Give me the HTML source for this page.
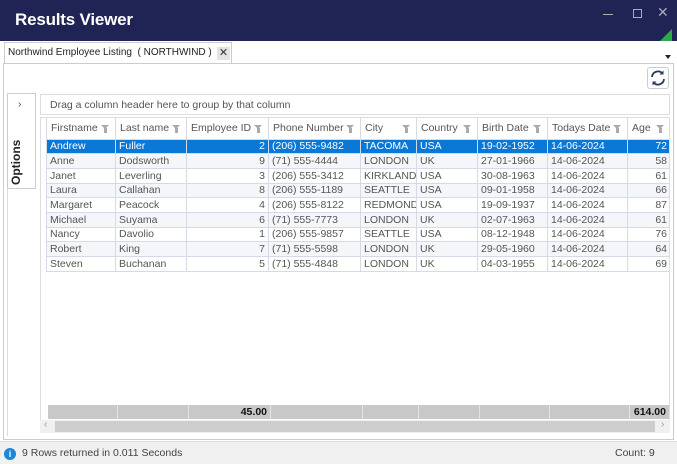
<!DOCTYPE html><html><head><style>
*{margin:0;padding:0;box-sizing:border-box}
body{width:677px;height:464px;overflow:hidden;font-family:"Liberation Sans",sans-serif;font-size:10.5px;color:#555;background:#fff;position:relative}
.title{position:absolute;left:0;top:0;width:677px;height:41px;background:#1f2454}
.title h1{position:absolute;left:15px;top:10px;color:#fff;font-size:17px;font-weight:bold;letter-spacing:-0.2px}
.tab{position:absolute;left:4px;top:42px;width:228px;height:21px;border:1px solid #ccc;border-bottom:none;background:#fff;font-size:10px;color:#222;padding:4px 0 0 3px;white-space:nowrap}
.x{position:absolute;left:212px;top:4px;width:13px;height:13px;background:#e4e4e4;font-size:11px;line-height:13px;text-align:center;color:#333}
.content{position:absolute;left:3px;top:63px;width:671px;height:377px;border:1px solid #ccc;background:#fff}
.side{position:absolute;left:7px;top:93px;width:30px;height:343px;border-left:1px solid #ddd}
.sidetab{position:absolute;left:7px;top:93px;width:29px;height:96px;border:1px solid #ccc;background:#fff}
.opt{position:absolute;left:9px;top:185px;transform:rotate(-90deg);transform-origin:0 0;font-size:12px;font-weight:bold;color:#222}
.group{position:absolute;left:40px;top:94px;width:630px;height:21px;border:1px solid #ddd;color:#555;padding:4px 0 0 9px}
.grid{position:absolute;left:40px;top:117px;width:630px;height:316px;border:1px solid #ddd;background:#fff;overflow:hidden}
table{border-collapse:collapse;position:absolute;left:5px;top:0;table-layout:fixed;width:624px}
td{height:14.7px;border:1px solid #d3dbe6;padding:0 3px;white-space:nowrap;overflow:hidden;font-size:10.5px;line-height:12px}
th{height:21px;border:1px solid #d3dbe6;border-top:none;text-align:left;font-weight:normal;padding:0 4px;color:#555;background:#fff;position:relative;white-space:nowrap;overflow:hidden;font-size:10.5px}
th i{position:absolute;right:5px;top:7px;width:9px;height:8px}
th i:before{content:"";position:absolute;left:0;top:0;border-left:4.5px solid transparent;border-right:4.5px solid transparent;border-top:4px solid #aaa}
th i:after{content:"";position:absolute;left:3px;top:3px;width:3px;height:5px;background:#aaa}
tr.alt td{background:#f4f6f9}
tr.sel td{background:#0a78d7;color:#fff}
.r{text-align:right}
.foot{position:absolute;left:48px;top:405px;width:621px;height:14px;background:#c8c8c8;display:flex}
.foot div{border-right:1px solid #e4e4e4;height:14px;font-weight:bold;color:#111;text-align:right;padding-right:3px;font-size:10.5px;line-height:14px}
.scroll{position:absolute;left:40px;top:420px;width:630px;height:13px;background:#f0f0f0}
.scroll .th{position:absolute;left:15px;top:1px;width:600px;height:11px;background:#cdcdcd}
.status{position:absolute;left:0;top:441px;width:677px;height:23px;background:#f0f0f0;border-top:1px solid #ddd;color:#444}
.ref{position:absolute;left:647px;top:67px;width:22px;height:22px;border:1px solid #ccc;border-radius:3px;background:#fff}
</style></head><body>
<div class="title"><h1>Results Viewer</h1>
<div style="position:absolute;left:603px;top:14px;width:10px;height:1px;background:#aab"></div>
<div style="position:absolute;left:633px;top:9px;width:9px;height:9px;border:1px solid #aab"></div>
<div style="position:absolute;left:657px;top:4px;color:#aab;font-size:14px">✕</div>
<div style="position:absolute;left:660px;top:29px;width:0;height:0;border-left:12px solid transparent;border-bottom:12px solid #2ea84a"></div>
</div>
<div class="tab">Northwind Employee Listing &nbsp;( NORTHWIND )<div class="x">✕</div></div>
<div style="position:absolute;left:665px;top:55px;width:5px;height:4px;border-left:3px solid transparent;border-right:3px solid transparent;border-top:4px solid #222"></div>
<div class="content"></div>
<div class="ref"><svg width="20" height="20" viewBox="0 0 20 20"><path d="M4 9a6 6 0 0 1 10.5-3.5M16 11a6 6 0 0 1-10.5 3.5" fill="none" stroke="#2a3a5a" stroke-width="1.8"/><path d="M15.5 2.5v4h-4z M4.5 17.5v-4h4z" fill="#2a3a5a"/></svg></div>
<div class="side"></div>
<div class="sidetab"><div style="position:absolute;left:10px;top:4px;color:#555">›</div></div>
<div class="opt">Options</div>
<div class="group">Drag a column header here to group by that column</div>
<div class="grid">
<table>
<colgroup><col style="width:69px"><col style="width:71px"><col style="width:82px"><col style="width:92px"><col style="width:56px"><col style="width:61px"><col style="width:70px"><col style="width:80px"><col style="width:43px"></colgroup>
<tr><th>Firstname<i></i></th><th>Last name<i></i></th><th>Employee ID<i></i></th><th>Phone Number<i></i></th><th>City<i></i></th><th>Country<i></i></th><th>Birth Date<i></i></th><th>Todays Date<i></i></th><th>Age<i></i></th></tr>
<tr class="sel"><td>Andrew</td><td>Fuller</td><td class="r">2</td><td>(206) 555-9482</td><td>TACOMA</td><td>USA</td><td>19-02-1952</td><td>14-06-2024</td><td class="r">72</td></tr>
<tr class="alt"><td>Anne</td><td>Dodsworth</td><td class="r">9</td><td>(71) 555-4444</td><td>LONDON</td><td>UK</td><td>27-01-1966</td><td>14-06-2024</td><td class="r">58</td></tr>
<tr><td>Janet</td><td>Leverling</td><td class="r">3</td><td>(206) 555-3412</td><td>KIRKLAND</td><td>USA</td><td>30-08-1963</td><td>14-06-2024</td><td class="r">61</td></tr>
<tr class="alt"><td>Laura</td><td>Callahan</td><td class="r">8</td><td>(206) 555-1189</td><td>SEATTLE</td><td>USA</td><td>09-01-1958</td><td>14-06-2024</td><td class="r">66</td></tr>
<tr><td>Margaret</td><td>Peacock</td><td class="r">4</td><td>(206) 555-8122</td><td>REDMOND</td><td>USA</td><td>19-09-1937</td><td>14-06-2024</td><td class="r">87</td></tr>
<tr class="alt"><td>Michael</td><td>Suyama</td><td class="r">6</td><td>(71) 555-7773</td><td>LONDON</td><td>UK</td><td>02-07-1963</td><td>14-06-2024</td><td class="r">61</td></tr>
<tr><td>Nancy</td><td>Davolio</td><td class="r">1</td><td>(206) 555-9857</td><td>SEATTLE</td><td>USA</td><td>08-12-1948</td><td>14-06-2024</td><td class="r">76</td></tr>
<tr class="alt"><td>Robert</td><td>King</td><td class="r">7</td><td>(71) 555-5598</td><td>LONDON</td><td>UK</td><td>29-05-1960</td><td>14-06-2024</td><td class="r">64</td></tr>
<tr><td>Steven</td><td>Buchanan</td><td class="r">5</td><td>(71) 555-4848</td><td>LONDON</td><td>UK</td><td>04-03-1955</td><td>14-06-2024</td><td class="r">69</td></tr>
</table></div>
<div class="foot"><div style="width:70px"></div><div style="width:71px"></div><div style="width:82px">45.00</div><div style="width:92px"></div><div style="width:56px"></div><div style="width:61px"></div><div style="width:70px"></div><div style="width:80px"></div><div style="width:39px;border:none">614.00</div></div>
<div class="scroll"><div class="th"></div><span style="position:absolute;left:4px;top:-1px;color:#999;font-size:10px">‹</span><span style="position:absolute;left:621px;top:-1px;color:#999;font-size:10px">›</span></div>
<div class="status">
<div style="position:absolute;left:4px;top:6px;width:12px;height:12px;border-radius:50%;background:#1a88d6;color:#fff;font-size:9px;font-weight:bold;text-align:center;line-height:12px">i</div>
<span style="position:absolute;left:22px;top:5px">9 Rows returned in 0.011 Seconds</span>
<span style="position:absolute;left:615px;top:5px">Count: 9</span></div>
</body></html>
